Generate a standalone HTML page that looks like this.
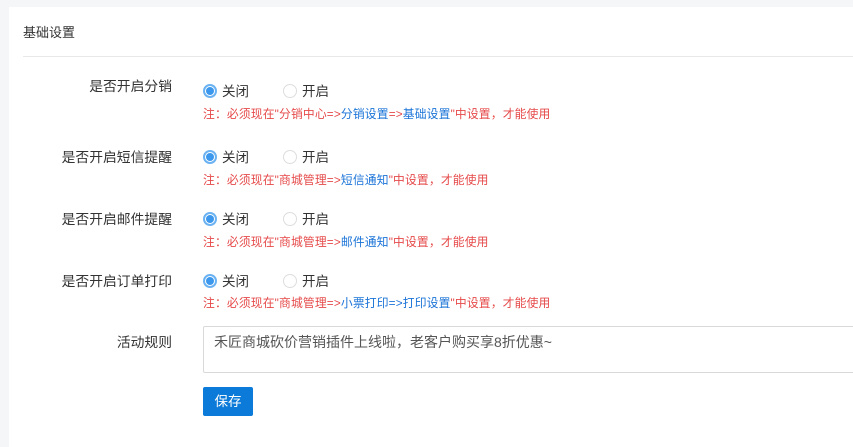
<!DOCTYPE html>
<html><head><meta charset="utf-8"><style>
*{margin:0;padding:0;box-sizing:border-box}
body{width:853px;height:442px;background:#f5f6f7;font-family:"Liberation Sans","Noto Sans CJK SC",sans-serif;color:#333;overflow:hidden;position:relative}
.panel{position:absolute;left:9px;top:7px;width:860px;height:440px;background:#fff}
.abs{position:absolute;white-space:nowrap}
.title{left:23px;top:22px;font-size:13px;color:#333}
.hr{left:23px;top:56px;width:840px;height:1px;background:#e8e8e8}
.lbl{font-size:13.8px;color:#333;right:681px;text-align:right}
.radio{display:inline-block;width:14px;height:14px;border-radius:50%;border:1px solid #ddd;vertical-align:-2px;margin-right:5px;position:relative;background:#fff}
.radio.on{border:2px solid #6ab2f2}
.radio.on:after{content:"";position:absolute;left:1px;top:1px;width:8px;height:8px;border-radius:50%;background:#3b98ec}
.rg{font-size:13.5px;left:203px}
.rg span.o{margin-right:34px}
.note{font-size:11.8px;color:#e64a4a;left:203px;letter-spacing:0.15px}
.note b{font-weight:normal;color:#1a73d8}
.ta{left:203px;top:326px;width:660px;height:47px;border:1px solid #d9d9d9;border-radius:2px;font-size:14px;color:#555;padding:5px 0 0 10px}
.btn{left:203px;top:387px;width:50px;height:29px;background:#0b7ad8;color:#fff;font-size:13.5px;border-radius:2px;text-align:center;line-height:29px}
</style></head><body>
<div class="panel"></div>
<div class="abs title">基础设置</div>
<div class="abs hr"></div>

<div class="abs lbl" style="top:75px">是否开启分销</div>
<div class="abs rg" style="top:80px"><span class="o"><i class="radio on"></i>关闭</span><span><i class="radio"></i>开启</span></div>
<div class="abs note" style="top:105px">注：必须现在"分销中心=&gt;<b>分销设置</b>=&gt;<b>基础设置</b>"中设置，才能使用</div>

<div class="abs lbl" style="top:146px">是否开启短信提醒</div>
<div class="abs rg" style="top:146px"><span class="o"><i class="radio on"></i>关闭</span><span><i class="radio"></i>开启</span></div>
<div class="abs note" style="top:171px">注：必须现在"商城管理=&gt;<b>短信通知</b>"中设置，才能使用</div>

<div class="abs lbl" style="top:208px">是否开启邮件提醒</div>
<div class="abs rg" style="top:208px"><span class="o"><i class="radio on"></i>关闭</span><span><i class="radio"></i>开启</span></div>
<div class="abs note" style="top:233px">注：必须现在"商城管理=&gt;<b>邮件通知</b>"中设置，才能使用</div>

<div class="abs lbl" style="top:270px">是否开启订单打印</div>
<div class="abs rg" style="top:270px"><span class="o"><i class="radio on"></i>关闭</span><span><i class="radio"></i>开启</span></div>
<div class="abs note" style="top:294px">注：必须现在"商城管理=&gt;<b>小票打印=&gt;打印设置</b>"中设置，才能使用</div>

<div class="abs lbl" style="top:331px">活动规则</div>
<div class="abs ta">禾匠商城砍价营销插件上线啦，老客户购买享8折优惠~</div>
<div class="abs btn">保存</div>
</body></html>
